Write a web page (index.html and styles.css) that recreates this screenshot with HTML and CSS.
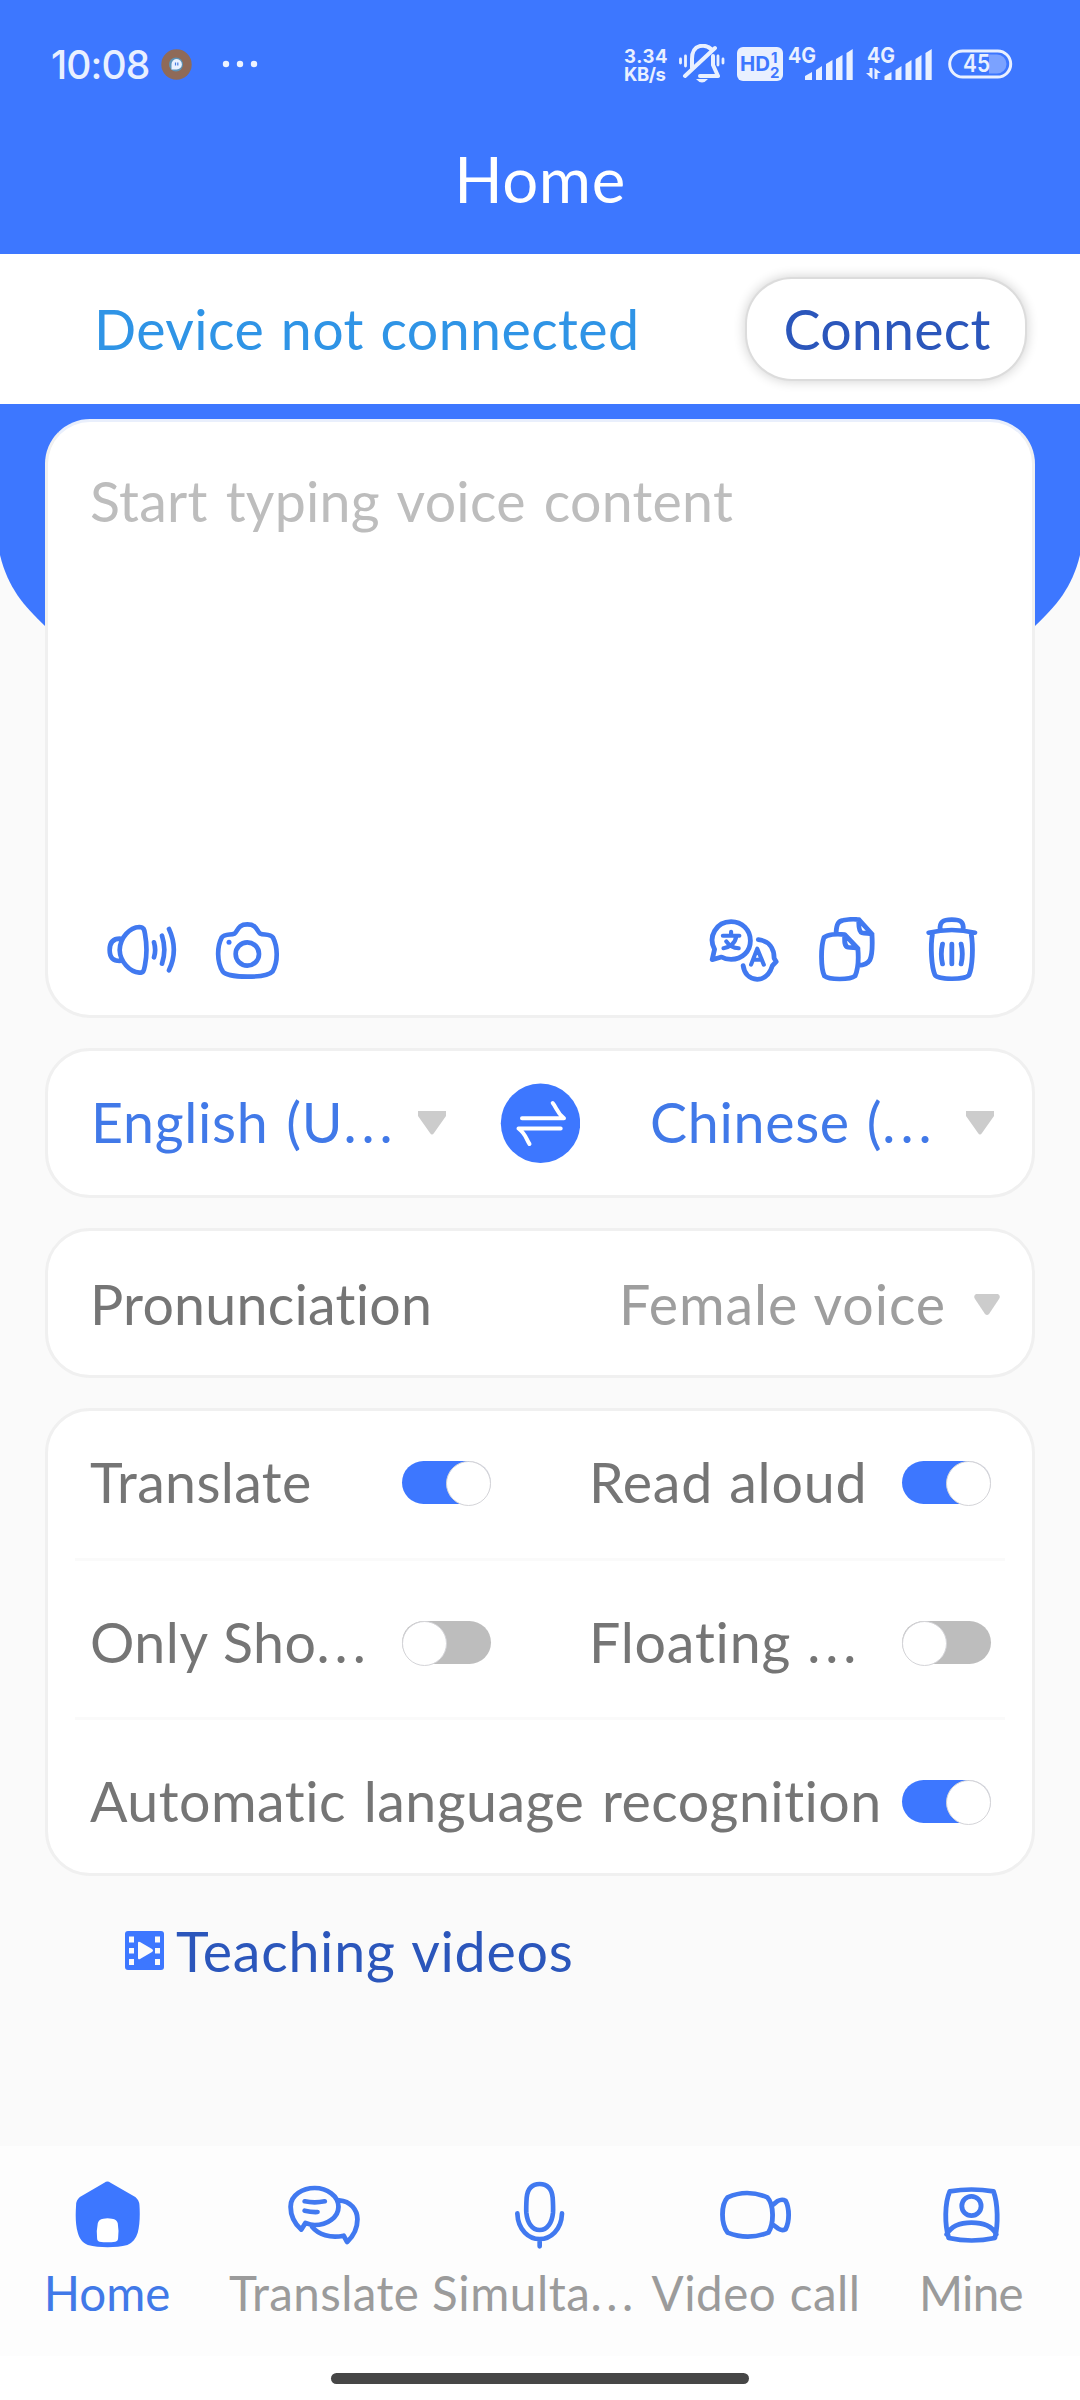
FILE: index.html
```html
<!DOCTYPE html>
<html lang="en">
<head>
<meta charset="utf-8">
<title>Home</title>
<link rel="stylesheet" href="styles.css">
</head>
<body>
<div class="screen">
  <header class="header">
    <div class="status">
      <div class="status-left">
        <span class="clock">10:08</span>
        <svg class="chat-badge" width="31" height="31" viewBox="0 0 31 31"><circle cx="15.500" cy="15.500" r="15.200" fill="#8f6a58"/><circle cx="15" cy="15.500" r="7" fill="#5b93b8"/><path d="M10.500 20.500V15a5.200 5.200 0 1 1 5.200 5.500z" fill="#eaf2ff"/><path d="M14.500 13.500v3M16.800 13.500v3" stroke="#4a7fe0" stroke-width="1.200"/></svg>
        <svg class="more" width="36" height="8" viewBox="0 0 36 8" fill="#eef3ff"><circle cx="4" cy="4" r="3.200"/><circle cx="18" cy="4" r="3.200"/><circle cx="32" cy="4" r="3.200"/></svg>
      </div>
      <div class="status-right">
        <div class="speed"><span>3.34</span><span>KB/s</span></div>
        <svg class="bell" width="46" height="40" viewBox="679 45 46 40" fill="none" stroke="#e9f0ff" stroke-width="4" stroke-linecap="round" stroke-linejoin="round"><path d="M692 69V60C692 44 706 45 711 50M713 57V66L718 77H700M685 77L715 49"/><path d="M696 80H708Q702 87 696 80Z" fill="#e9f0ff" stroke="none"/><path d="M680.500 60V64M685.500 57V67M718 57V66M723 60V64" stroke-width="2.800"/></svg>
        <svg class="hd" width="46" height="34" viewBox="0 0 46 34"><rect width="46" height="34" rx="6" fill="#e9f0ff"/><g fill="#3d77ff" class="bar-text"><text x="3" y="24" font-size="20" textLength="30" lengthAdjust="spacingAndGlyphs">HD</text><text x="34" y="15.500" font-size="15">1</text><text x="33" y="30.500" font-size="15">2</text></g></svg>
        <svg class="signal-a" width="66" height="44" viewBox="788 42 66 44" fill="#e9f0ff"><text class="bar-text" x="788" y="62.500" font-size="21.500" textLength="28" lengthAdjust="spacingAndGlyphs">4G</text><path d="M805 76l7-4v8h-7zM816 70l6-4v14h-6zM826 64l6.500-4v20H826zM836 59l6.500-4v25H836zM846.500 53l6.200-4v31h-6.200z"/></svg>
        <svg class="signal-b" width="66" height="44" viewBox="866 42 66 44" fill="#e9f0ff"><text class="bar-text" x="867" y="62.500" font-size="21.500" textLength="28" lengthAdjust="spacingAndGlyphs">4G</text><path d="M884.500 76l7-4v8h-7zM895.500 70l6-4v14h-6zM905.500 64l6-4v20h-6zM915.500 59l6-4v25h-6zM925.500 53l6.200-4v31h-6.200zM869.500 68h3v11l-6.500-6h3.500zM874.500 79h3v-6h3.500l-6.500-5z"/></svg>
        <svg class="battery" width="65" height="30" viewBox="0 0 65 30"><rect x="1.700" y="2" width="61" height="26" rx="13" fill="none" stroke="#e9f0ff" stroke-width="3"/><path d="M41 5.500H49a9.500 9.500 0 0 1 0 19H41z" fill="#7ba2ff"/><text class="bar-text light" x="15" y="23" font-size="24" fill="#e9f0ff" textLength="27" lengthAdjust="spacingAndGlyphs">45</text></svg>
      </div>
    </div>
    <h1 class="title">Home</h1>
  </header>

  <section class="device">
    <span class="device-state">Device not connected</span>
    <button class="connect">Connect</button>
  </section>

  <main class="main">
    <svg class="backdrop" width="1080" height="260" viewBox="0 0 1080 260"><path d="M0 0H1080V151C1072 184 1056 202 1035 222L1000 250H80L45 222C24 202 8 184 0 151Z" fill="#3d77ff"/></svg>

    <section class="card editor">
      <p class="placeholder">Start typing voice content</p>
      <div class="actions">
        <svg class="icon speaker" width="72" height="65" viewBox="201 111 216 195"><path d="M298 141C312 141 313 150 315 162C321 195 321 225 315 255C312 270 312 278 298 278C270 276 240 245 239 210C240 172 270 142 298 141zM240 176C222 176 209 184 209 210C209 236 222 243 240 243M342 187Q349 210 342 232M366 167Q380 210 366 251M387 147Q416 210 387 271"/></svg>
        <svg class="icon camera" width="67" height="65" viewBox="522 111 201 195"><path d="M583 161C594 154 592 133 622 133C652 133 650 154 661 161C672 166 690 160 699 173C713 200 715 245 698 274C688 285 655 290 622 290C590 290 556 285 548 274C530 245 531 200 545 173C554 160 572 166 583 161z"/><circle cx="622" cy="222" r="35"/><circle class="solid" cx="567" cy="187" r="7.500"/></svg>
        <svg class="icon translate" width="70" height="65" viewBox="507 111 210 195"><g transform="scale(1.033 1)"><path d="M527 231L500 239L507 208C487 170 512 125 555 125C587 125 611 150 611 182C611 214 587 238 555 238C545 238 535 236 527 231zM634 179C665 182 680 205 680 235L686 245L675 257C668 280 655 297 631 298C607 297 593 280 590 257"/><path d="M531 167H579M555 155V166M570 168C568 190 550 202 533 205M541 184C550 198 565 204 577 205M613 254L631 206L650 254M620 239H643" stroke-width="12"/></g></svg>
        <svg class="icon copy" width="60" height="65" viewBox="831 111 180 195"><g transform="scale(1.033 1)"><path d="M885 164C860 160 835 164 825 172C815 200 815 265 826 288C840 300 900 300 915 288C925 265 926 240 923 205L885 164C884 185 884 199 895 202C905 204 920 202 923 205M860 158C861 130 868 123 880 121C895 118 915 117 926 119L964 162C966 200 965 225 958 240C950 254 935 256 925 256M926 119C925 140 926 155 935 158C945 161 958 159 964 162"/></g></svg>
        <svg class="icon trash" width="54" height="65" viewBox="1155 111 162 195"><g transform="scale(1.033 1)"><path d="M1129 158Q1196 142 1263 158M1162 150C1160 125 1170 119 1196 119C1222 119 1231 125 1229 150M1140 160C1133 200 1137 260 1147 285C1155 300 1237 300 1246 285C1256 260 1259 200 1252 160M1169 192Q1162 222 1169 252M1196 192V252M1223 192Q1230 222 1223 252"/></g></svg>
      </div>
    </section>

    <section class="card languages">
      <span class="lang lang-from">English (U<span class="dots">...</span></span>
      <svg class="caret" width="28" height="24" viewBox="0 0 28 24"><path d="M0 0H28V5L16 22Q14 25 12 22L0 5z"/></svg>
      <svg class="swap" width="80" height="80" viewBox="500 1083 80 80"><circle cx="540.500" cy="1123.300" r="39.700" fill="#3d77ff"/><path d="M522 1118.300H564C556 1112 557 1108 552.700 1103M560.700 1128.500H518.500C526 1134 526 1139 529.500 1144" fill="none" stroke="#fff" stroke-width="4" stroke-linecap="round" stroke-linejoin="round"/></svg>
      <span class="lang lang-to">Chinese (<span class="dots">...</span></span>
      <svg class="caret" width="28" height="24" viewBox="0 0 28 24"><path d="M0 0H28V5L16 22Q14 25 12 22L0 5z"/></svg>
    </section>

    <section class="card voice">
      <span class="voice-label">Pronunciation</span>
      <span class="voice-value">Female voice</span>
      <svg class="caret" width="26" height="22" viewBox="0 0 26 22"><path d="M2 0H24Q27 2 25 5L15 20Q13 22 11 20L1 5Q-1 2 2 0z"/></svg>
    </section>

    <section class="card options">
      <div class="row row-first">
        <div class="option"><span class="label l-translate">Translate</span><i class="toggle on"></i></div>
        <div class="option"><span class="label l-read">Read aloud</span><i class="toggle on"></i></div>
      </div>
      <div class="row row-middle">
        <div class="option"><span class="label l-only">Only Sho<span class="dots">...</span></span><i class="toggle"></i></div>
        <div class="option"><span class="label l-float">Floating <span class="dots">...</span></span><i class="toggle"></i></div>
      </div>
      <div class="row row-last">
        <div class="option wide"><span class="label l-auto">Automatic language recognition</span><i class="toggle on"></i></div>
      </div>
    </section>

    <a class="videos">
      <svg width="39" height="39" viewBox="0 0 39 39"><rect width="39" height="39" rx="3" fill="#3d77ff"/><path d="M4 5.500h5v6H4zM4 17h5v5.500H4zM4 28h5v6H4zM30 5.500h5v6h-5zM30 17h5v5.500h-5zM30 28h5v6h-5zM13 12Q13 10 15 11L27 18Q29 19.500 27 21L15 28Q13 29 13 27z" fill="#fafafa"/></svg>
      <span>Teaching videos</span>
    </a>
  </main>

  <nav class="tabs">
    <a class="tab active">
      <svg class="icon" width="72" height="68" viewBox="216 183 216 204"><g transform="scale(1.033 1)"><path class="solid" d="M303 188Q312 181 321 188L393 231Q404 240 405 255C407 285 406 315 400 338C395 355 385 368 370 375C335 384 290 384 255 375C240 368 230 355 226 338C219 315 219 285 221 255Q221 240 232 231z"/><path class="door" d="M284 310Q286 298 300 296Q312 294 325 296Q340 298 342 310Q346 335 343 355Q342 365 335 365Q312 369 289 365Q282 364 282 355Q279 335 284 310z"/></g></svg>
      <span class="t-home">Home</span>
    </a>
    <a class="tab">
      <svg class="icon" width="72" height="68" viewBox="864 183 216 204"><g transform="scale(1.033 1)"><path d="M887 309L875 329C860 315 844 290 844 260C844 225 880 204 914 204C950 204 983 228 983 260C983 292 950 315 914 315C903 315 895 312 887 309zM885 244Q914 250 943 244M885 272Q905 277 922 276M985 241C1018 243 1038 270 1038 298C1038 330 1025 350 1008 366L998 347C960 355 925 345 906 320"/></g></svg>
      <span class="t-translate">Translate</span>
    </a>
    <a class="tab tab-cut">
      <svg class="icon" width="72" height="68" viewBox="0 0 216 204"><path d="M107 9C128 9 143 20 146 50C147 65 148 80 147 95C144 125 130 147 107 147C84 147 70 125 67 95C66 80 67 65 68 50C71 20 86 9 107 9zM40 97C42 148 75 174 107 174C139 174 172 148 174 97M107 174V196"/></svg>
      <span class="t-simul">Simulta<span class="dots">...</span></span>
    </a>
    <a class="tab">
      <svg class="icon" width="72" height="68" viewBox="540 183 216 204"><g transform="scale(1.033 1)"><path d="M545 232Q600 206 660 232C680 255 680 310 663 338Q603 362 545 338C525 310 525 255 545 232zM678 253L690 243Q703 236 713 242C725 265 725 305 713 328Q702 333 692 326L678 315"/></g></svg>
      <span class="t-video">Video call</span>
    </a>
    <a class="tab">
      <svg class="icon" width="72" height="68" viewBox="1188 183 216 204"><g transform="scale(1.033 1)"><path d="M1190 214Q1253 203 1317 214C1330 250 1331 315 1321 354Q1253 369 1187 354C1175 315 1175 250 1190 214zM1181 343Q1200 308 1253 308Q1308 308 1325 343"/><ellipse cx="1253" cy="258" rx="28" ry="29"/></g></svg>
      <span class="t-mine">Mine</span>
    </a>
  </nav>
  <footer class="gesture"><div class="handle"></div></footer>
</div>
</body>
</html>
```
FILE: styles.css
```css
* { box-sizing: border-box; }
body { margin: 0; background: #fafafa; font-family: Lato, sans-serif; }
.screen { width: 1080px; height: 2400px; display: flex; flex-direction: column; overflow: hidden; font-size: 55.5px; line-height: 68px; white-space: nowrap; }

/* Header and status bar */
.header { height: 254px; background: #3d77ff; color: #fff; }
.status { height: 128px; padding: 0 67px 0 51px; display: flex; justify-content: space-between; align-items: center; }
.status-left, .status-right { display: flex; align-items: center; }
.clock { font: 500 39px/48px Inter, sans-serif; color: #e9f0ff; letter-spacing: -0.9px; width: 110px; padding-top: 1px; }
.more { margin-left: 30px; }
.speed { width: 44px; display: flex; flex-direction: column; font: 700 18.5px/18px Inter, sans-serif; color: #e9f0ff; padding-top: 2px; }
.speed span:first-child { letter-spacing: 0.6px; }
.speed span:last-child { letter-spacing: -0.4px; }
.bell { margin-left: 11px; }
.hd { margin-left: 12px; }
.signal-a { margin-left: 5px; }
.signal-b { margin-left: 12px; }
.battery { margin-left: 16px; }
.bar-text { font-family: Inter, sans-serif; font-weight: 700; }
.light { font-weight: 600; }
.title { margin: 0; padding-top: 11px; font-size: 63.5px; font-weight: 400; line-height: 80px; text-align: center; letter-spacing: 0.6px; }

/* Device connection strip */
.device { height: 150px; padding: 0 55px 0 94px; background: #fff; display: flex; align-items: center; justify-content: space-between; }
.device-state { color: #2f94e6; letter-spacing: 0.4px; word-spacing: 2px; }
.connect { width: 278px; height: 100px; padding: 0 0 1px 2px; border: 0; border-radius: 45px; background: #fff; color: #2b56bb; font: 400 55.5px/68px Lato, sans-serif; letter-spacing: 0.2px; box-shadow: 0 0 0 2px #dcdcdc, 0 0 11px 3px rgba(0, 0, 0, 0.16); }

/* Cards */
.main { position: relative; flex: 0 0 1742px; padding: 15px 45px 0; display: flex; flex-direction: column; gap: 30px; color: #757575; }
.backdrop { position: absolute; left: 0; top: 0; }
.card { position: relative; flex: none; background: #fff; border: 3px solid #f0f0f0; border-radius: 45px; }
.editor { height: 599px; padding: 45px 53px 33px 42px; border-top-color: #e9effc; display: flex; flex-direction: column; justify-content: space-between; }
.placeholder { margin: 0; color: #bdbdbd; letter-spacing: 0.25px; word-spacing: 3.5px; }
.actions { display: flex; align-items: center; padding-left: 17px; }
.icon { flex: none; fill: none; stroke: #4179f0; stroke-width: 14; stroke-linecap: round; stroke-linejoin: round; }
.icon .solid { fill: #3d77ff; stroke: none; }
.icon .door { fill: #fff; stroke: none; }
.camera { margin-left: 35px; }
.translate { margin-left: auto; }
.copy { margin-left: 38px; }
.trash { margin-left: 48px; }
.dots { letter-spacing: 5px; }
.caret { flex: none; fill: #ccc; }

.languages { height: 150px; padding: 0 38px 0 43px; display: flex; align-items: center; color: #4179e8; }
.lang { padding-bottom: 2px; }
.lang-from { width: 327px; letter-spacing: 0.7px; word-spacing: 3px; }
.lang-to { width: 316px; letter-spacing: 0.7px; word-spacing: 2px; }
.swap { margin: 0 70px 0 54px; }

.voice { height: 150px; padding: 0 32px 0 42px; display: flex; align-items: center; }
.voice-label { letter-spacing: 0.26px; padding-top: 1px; }
.voice-value { margin-left: auto; color: #9e9e9e; letter-spacing: 0.9px; word-spacing: 1.5px; padding-top: 1px; }
.voice .caret { margin-left: 28px; margin-top: 4px; }

.options { height: 468px; padding: 0 27px; }
.row { display: grid; grid-template-columns: 401px 402px; column-gap: 98px; padding: 0 15px 0 15px; align-items: center; }
.row-first { height: 150px; padding-bottom: 4px; border-bottom: 3px solid #fafafa; }
.row-middle { height: 159px; padding-top: 7px; border-bottom: 3px solid #fafafa; }
.row-last { height: 153px; padding-top: 10px; }
.option { display: flex; justify-content: space-between; align-items: center; }
.wide { grid-column: 1 / 3; }
.label { padding-bottom: 2px; }
.l-translate { letter-spacing: 0.36px; }
.l-read { letter-spacing: 0.8px; word-spacing: 1px; }
.l-only { letter-spacing: 0.5px; word-spacing: 1px; }
.l-float { letter-spacing: 0.8px; word-spacing: 1px; }
.l-auto { letter-spacing: 0.48px; word-spacing: 3px; }
.toggle { flex: none; width: 89px; height: 43px; border-radius: 22px; background: #bdbdbd; display: flex; }
.toggle::before { content: ""; width: 43px; height: 43px; border-radius: 50%; background: #fff; border: 1px solid #d4d4d8; }
.toggle.on { background: linear-gradient(90deg, #3d77ff 75%, #d4d6e0 75%); justify-content: flex-end; }

.videos { display: flex; align-items: center; gap: 12px; margin: 10px 0 0 80px; color: #2b56bb; letter-spacing: 0.75px; word-spacing: 2px; }
.videos span { padding-top: 1px; }

/* Bottom navigation */
.tabs { height: 210px; padding-top: 35px; background: #fdfdfd; display: grid; grid-template-columns: repeat(5, 216px); color: #9b9b9b; font-size: 47.5px; line-height: 60px; }
.tab { display: flex; flex-direction: column; align-items: center; gap: 14px; }
.tab-cut { align-items: flex-start; padding-left: 0; }
.tab-cut .icon { margin-left: 72px; }
.tabs .dots { letter-spacing: 4.5px; }
.active { color: #4179e8; }
.t-home, .t-mine { margin-left: -2px; }
.t-translate { letter-spacing: 0.37px; }
.t-simul { letter-spacing: 0.6px; }
.t-video { letter-spacing: 0.5px; word-spacing: 1px; }
.t-mine { letter-spacing: -0.7px; }
.gesture { height: 44px; background: #fff; display: flex; justify-content: center; padding-top: 17px; }
.handle { width: 418px; height: 11px; border-radius: 6px; background: #464646; }
```
